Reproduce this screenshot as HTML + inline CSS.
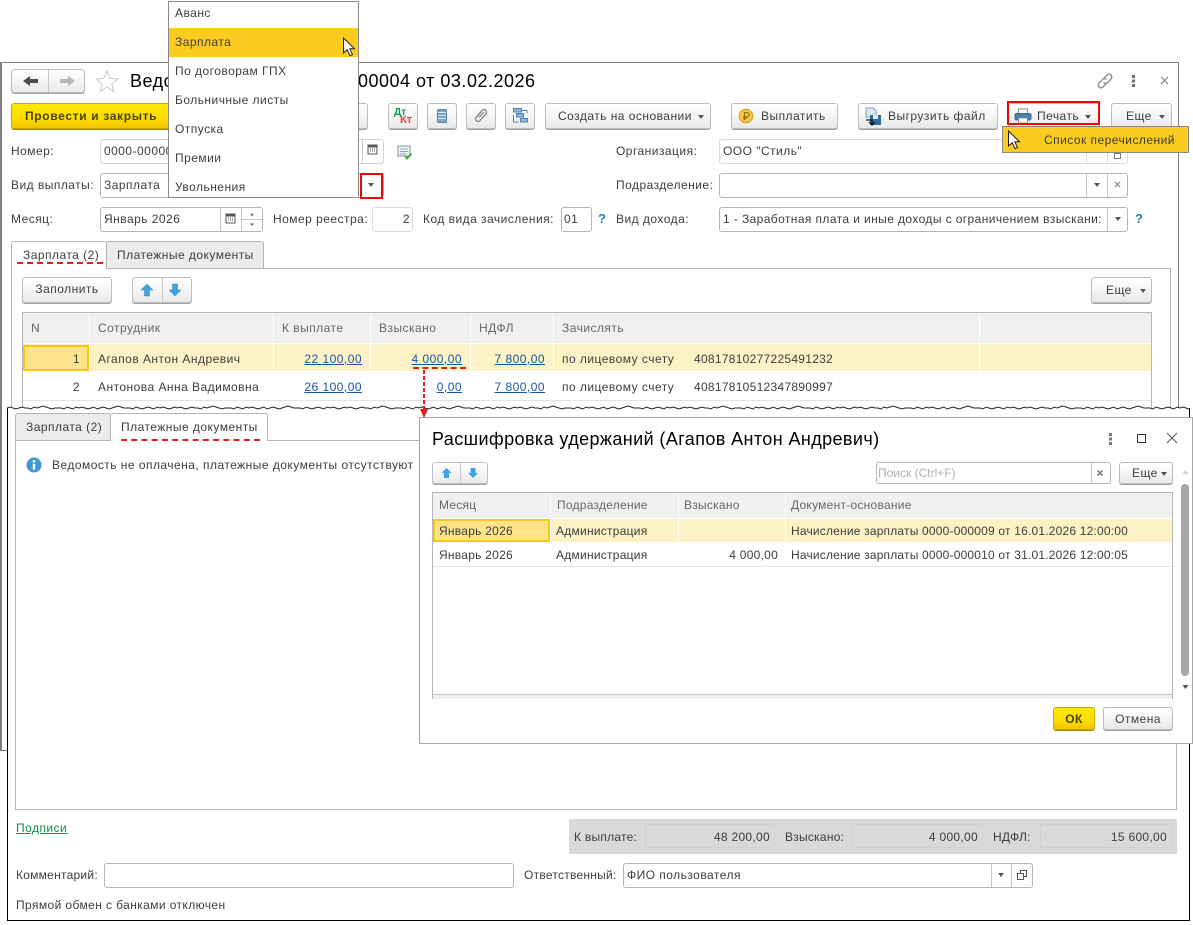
<!DOCTYPE html>
<html lang="ru"><head><meta charset="utf-8"><title>Ведомость</title>
<style>
html,body{margin:0;padding:0;background:#fff}
#p{position:relative;width:1193px;height:925px;overflow:hidden;background:#fff;font:12px "Liberation Sans",sans-serif;color:#3d3d3d;letter-spacing:.47px}
#p div,#p a,#p svg{position:absolute;box-sizing:border-box}
.t{white-space:nowrap;line-height:16px;height:16px}
.r{text-align:right}
.b{background:linear-gradient(#fff,#f6f6f6 45%,#e9e9e9);border:1px solid #bcbcbc;border-radius:3px;box-shadow:0 1px 0 #a0a0a0;text-align:center;line-height:23px;white-space:nowrap}
.y{background:linear-gradient(#ffe900,#fbdd00 60%,#f0c400);border:1px solid #c9a900;border-radius:3px;box-shadow:0 1px 0 #a38a00;text-align:center;white-space:nowrap;font-weight:bold;color:#4a4300}
.i{background:#fff;border:1px solid #b5b5b5;border-radius:3px}
.il{background:#fff;border:1px solid #dcdcdc;border-radius:3px}
.v{width:1px;background:#c8c8c8}
.h{background:#f0f0f0;color:#555}
.ar{width:0;height:0;border-left:3px solid transparent;border-right:3px solid transparent;border-top:4px solid #555}
.l{color:#1b55a7;text-decoration:underline}
.w{width:1px;background:#fff}
.q{color:#1b84c4;font-weight:bold;font-size:13px}
.d{height:0;border-top:2px dashed #e41c1c}
.s{letter-spacing:.25px}
</style></head><body><div id="p">

<!-- window 1 -->
<div style="left:0;top:62px;width:1179px;height:689px;border:1px solid #7f7f7f;border-left-width:2px"></div>

<div class="b" style="left:11px;top:69px;width:74px;height:24px"></div>
<div class="v" style="left:48px;top:70px;height:22px"></div>
<svg style="left:21px;top:74px" width="60" height="14"><path d="M2 7l7-5v3h8v4h-8v3z" fill="#4b4b4b"/><path d="M54 7l-7-5v3h-8v4h8v3z" fill="#b5b5b5"/></svg>
<svg style="left:95px;top:69px" width="24" height="24"><path d="M12 2l3 7.400 7.800.6-6 5 1.900 7.700L12 18l-6.700 4.700L7.200 15l-6-5L9 9.400z" fill="#fff" stroke="#c9c9c9"/></svg>
<div class="t" style="left:130px;top:71px;font-size:18px;line-height:20px;height:20px;color:#000;letter-spacing:.5px">Ведо</div>
<div class="t" style="left:358px;top:71px;font-size:18px;line-height:20px;height:20px;color:#000;letter-spacing:.5px">00004 от 03.02.2026</div>
<svg style="left:1096px;top:72px" width="18" height="18" fill="none" stroke="#8a8a8a" stroke-width="1.300"><path d="M8 6l3-3a2.800 2.800 0 014 4l-3.500 3.500a2.800 2.800 0 01-4 0"/><path d="M10 12l-3 3a2.800 2.800 0 01-4-4l3.500-3.500a2.800 2.800 0 014 0"/></svg>
<svg style="left:1131px;top:74px" width="6" height="14" fill="#6e6e6e"><rect x="1" y="1" width="3" height="3"/><rect x="1" y="5.500" width="3" height="3"/><rect x="1" y="10" width="3" height="3"/></svg>
<svg style="left:1160px;top:76px" width="10" height="10" stroke="#777" fill="none"><path d="M1 1l7 7M8 1l-7 7"/></svg>

<div class="b" style="left:172px;top:103px;width:196px;height:26px"></div>
<div class="y" style="left:11px;top:103px;width:160px;height:26px;line-height:25px;text-align:left;padding-left:13px;letter-spacing:.66px">Провести и закрыть</div>
<div class="b" style="left:388px;top:103px;width:30px;height:26px"></div>
<div class="t" style="left:394px;top:108px;font-size:10px;line-height:10px;height:10px;color:#0f9a4e;font-weight:bold;letter-spacing:0">Дт</div>
<div class="t" style="left:400px;top:115px;font-size:11px;line-height:10px;height:10px;color:#e8413d;font-weight:bold;letter-spacing:0">Кт</div>
<div class="b" style="left:427px;top:103px;width:30px;height:26px"></div>
<svg style="left:436px;top:108px" width="12" height="16"><rect x="1.500" y="1.500" width="9" height="13" rx="1" fill="#7fa6c6" stroke="#5d83a3"/><path d="M2 4.500h8M2 7.500h8M2 10.500h8" stroke="#d5e4ef"/></svg>
<div class="b" style="left:466px;top:103px;width:30px;height:26px"></div>
<svg style="left:474px;top:108px" width="15" height="15" fill="none" stroke="#858585" stroke-width="1.300"><path d="M3 8l5-5.500a2.500 2.500 0 014 3.200L6 12.500a2.500 2.500 0 01-4-3l5.500-6"/><path d="M5 9.500l5-5.500"/></svg>
<div class="b" style="left:505px;top:103px;width:30px;height:26px"></div>
<svg style="left:512px;top:108px" width="16" height="15"><rect x="1.500" y=".5" width="8" height="3.500" fill="#8fb6d6" stroke="#4b86b4"/><rect x="4.500" y="5.500" width="7" height="3.500" fill="#8fb6d6" stroke="#4b86b4"/><rect x="8.500" y="10.500" width="7" height="3.500" fill="#8fb6d6" stroke="#4b86b4"/><path d="M10 2.500h5v3M1.500 7v7h5" fill="none" stroke="#4b86b4"/></svg>
<div class="b" style="left:545px;top:103px;width:166px;height:26px;text-align:left;padding-left:12px;line-height:24px">Создать на основании</div>
<div class="ar" style="left:698px;top:115px"></div>
<div class="b" style="left:731px;top:103px;width:107px;height:26px;text-align:left;padding-left:29px;line-height:24px">Выплатить</div>
<svg style="left:738px;top:108px" width="16" height="16"><circle cx="8" cy="8" r="6.800" fill="#f5c843" stroke="#d19a1a"/><path d="M6.500 12V4.500h2.500a2 2 0 010 4.300H5M5 10.300h4" fill="none" stroke="#9a6a00" stroke-width="1.100"/></svg>
<div class="b" style="left:858px;top:103px;width:140px;height:26px;text-align:left;padding-left:29px;line-height:24px">Выгрузить файл</div>
<svg style="left:864px;top:107px" width="18" height="19"><path d="M2 1h7l3 3v6H2z" fill="#dbe8f3" stroke="#7fa0bd"/><rect x="6" y="8" width="11" height="10" fill="#2f6ca3"/><rect x="9" y="8" width="5" height="4" fill="#e8eef4"/><path d="M2 13h6v4M5 15l3 3 3-3" fill="none" stroke="#111" stroke-width="1.200"/></svg>
<div class="b" style="left:1008px;top:103px;width:92px;height:26px"></div>
<svg style="left:1014px;top:108px" width="18" height="16"><rect x="4.500" y="1" width="9" height="5" fill="#fff" stroke="#8a8a8a"/><rect x="1" y="5.500" width="16" height="6.500" rx="1.500" fill="#4d7fa8" stroke="#3a6a92"/><rect x="4.500" y="10" width="9" height="5" fill="#fff" stroke="#8a8a8a"/></svg>
<div class="t" style="left:1037px;top:108px">Печать</div>
<div class="ar" style="left:1085px;top:115px"></div>
<div style="left:1007px;top:101px;width:93px;height:24px;border:2px solid #e60a0a"></div>
<div class="b" style="left:1111px;top:103px;width:61px;height:26px;text-align:left;padding-left:14px;line-height:24px">Еще</div>
<div class="ar" style="left:1159px;top:115px"></div>

<div class="t" style="left:11px;top:143px">Номер:</div>
<div class="i" style="left:100px;top:139px;width:284px;height:25px;border-color:#d4d4d4"></div>
<div class="t" style="left:104px;top:143px">0000-00000</div>
<div class="v" style="left:362px;top:140px;height:23px"></div>
<svg style="left:367px;top:143px" width="12" height="13"><rect x="1" y="2" width="9" height="9" fill="#fff" stroke="#555"/><path d="M1 3.500h9" stroke="#555" stroke-width="2"/><path d="M3 6h1M5 6h1M7 6h1M3 8h1M5 8h1M7 8h1" stroke="#555"/></svg>
<svg style="left:397px;top:145px" width="17" height="16"><rect x="1" y="1" width="12" height="10" fill="#f2f5f7" stroke="#7d97a8"/><path d="M3 4h8M3 6.500h8M3 9h6" stroke="#8ca3b3"/><path d="M8 11l2 2.500 4.500-5" fill="none" stroke="#3fb23f" stroke-width="2"/></svg>

<div class="t" style="left:11px;top:177px">Вид выплаты:</div>
<div class="i" style="left:100px;top:173px;width:284px;height:25px"></div>
<div class="t" style="left:104px;top:177px">Зарплата</div>
<div class="ar" style="left:368px;top:183px"></div>
<div style="left:360px;top:173px;width:23px;height:26px;border:2px solid #e60a0a"></div>

<div class="t" style="left:11px;top:211px">Месяц:</div>
<div class="i" style="left:100px;top:207px;width:163px;height:25px"></div>
<div class="t" style="left:104px;top:211px">Январь 2026</div>
<div class="v" style="left:220px;top:208px;height:23px"></div>
<div class="v" style="left:241px;top:208px;height:23px"></div>
<div style="left:242px;top:219px;width:20px;height:1px;background:#c8c8c8"></div>
<svg style="left:225px;top:212px" width="12" height="13"><rect x="1" y="2" width="9" height="9" fill="#fff" stroke="#555"/><path d="M1 3.500h9" stroke="#555" stroke-width="2"/><path d="M3 6h1M5 6h1M7 6h1M3 8h1M5 8h1M7 8h1" stroke="#555"/></svg>
<svg style="left:248px;top:212px" width="8" height="16" fill="#666"><path d="M4 1l2 2.500H2zM4 14l2-2.500H2z"/></svg>
<div class="t" style="left:273px;top:211px">Номер реестра:</div>
<div class="il" style="left:372px;top:207px;width:41px;height:25px"></div>
<div class="t r" style="left:372px;top:211px;width:38px">2</div>
<div class="t" style="left:423px;top:211px">Код вида зачисления:</div>
<div class="i" style="left:561px;top:207px;width:31px;height:25px"></div>
<div class="t" style="left:564px;top:211px">01</div>
<div class="t q" style="left:598px;top:211px">?</div>

<div class="t" style="left:616px;top:143px">Организация:</div>
<div class="il" style="left:719px;top:139px;width:409px;height:25px"></div>
<div class="t" style="left:723px;top:143px">ООО "Стиль"</div>
<div class="v" style="left:1086px;top:140px;height:23px;background:#dcdcdc"></div>
<div class="v" style="left:1107px;top:140px;height:23px;background:#dcdcdc"></div>
<div style="left:1114px;top:153px;width:7px;height:6px;border:1px solid #777"></div>
<div class="t" style="left:616px;top:177px">Подразделение:</div>
<div class="i" style="left:719px;top:173px;width:409px;height:25px"></div>
<div class="v" style="left:1086px;top:174px;height:23px"></div>
<div class="v" style="left:1107px;top:174px;height:23px"></div>
<div class="ar" style="left:1094px;top:183px"></div>
<svg style="left:1114px;top:181px" width="8" height="8" stroke="#777" fill="none"><path d="M1 1l5 5M6 1l-5 5"/></svg>
<div class="t" style="left:616px;top:211px">Вид дохода:</div>
<div class="i" style="left:719px;top:207px;width:409px;height:25px"></div>
<div class="t" style="left:723px;top:211px;width:384px;overflow:hidden;letter-spacing:.4px">1 - Заработная плата и иные доходы с ограничением взыскани:</div>
<div class="v" style="left:1107px;top:208px;height:23px"></div>
<div class="ar" style="left:1115px;top:217px"></div>
<div class="t q" style="left:1135px;top:211px">?</div>

<div style="left:11px;top:268px;width:1160px;height:150px;border:1px solid #b5b5b5;border-bottom:0"></div>
<div style="left:11px;top:241px;width:96px;height:28px;background:#fff;border:1px solid #b5b5b5;border-bottom:0;border-radius:3px 3px 0 0"></div>
<div style="left:106px;top:241px;width:158px;height:27px;background:#ececec;border:1px solid #b5b5b5;border-bottom:0;border-radius:3px 3px 0 0"></div>
<div class="t" style="left:23px;top:247px">Зарплата (2)</div>
<div class="t" style="left:117px;top:247px">Платежные документы</div>
<div class="d" style="left:17px;top:262px;width:86px"></div>

<div class="b" style="left:22px;top:277px;width:90px;height:26px">Заполнить</div>
<div class="b" style="left:132px;top:277px;width:60px;height:26px"></div>
<div class="v" style="left:162px;top:278px;height:24px"></div>
<svg style="left:140px;top:283px" width="42" height="14"><path d="M7 1l6 6h-3.500v6h-5V7H1z" fill="#3ea3e0" stroke="#2a86c0" stroke-width=".5"/><path d="M35 13l6-6h-3.500V1h-5v6H29z" fill="#3ea3e0" stroke="#2a86c0" stroke-width=".5"/></svg>
<div class="b" style="left:1091px;top:277px;width:61px;height:26px;text-align:left;padding-left:14px;line-height:24px">Еще</div>
<div class="ar" style="left:1140px;top:289px"></div>

<div style="left:22px;top:312px;width:1130px;height:110px;border:1px solid #b5b5b5;border-bottom:0"></div>
<div class="h" style="left:23px;top:313px;width:1128px;height:30px"></div>
<div style="left:23px;top:344px;width:1128px;height:27px;background:#fdf2c5"></div>
<div style="left:23px;top:345px;width:66px;height:26px;background:#fde38a;border:2px solid #f9c710"></div>
<div style="left:23px;top:400px;width:1128px;height:1px;background:#e2e2e2"></div>
<div class="w" style="left:89px;top:313px;height:58px"></div><div class="w" style="left:273px;top:313px;height:58px"></div><div class="w" style="left:370px;top:313px;height:58px"></div><div class="w" style="left:470px;top:313px;height:58px"></div><div class="w" style="left:553px;top:313px;height:58px"></div><div class="w" style="left:979px;top:313px;height:58px"></div>
<div class="t" style="left:31px;top:320px;color:#666">N</div>
<div class="t" style="left:98px;top:320px;color:#666">Сотрудник</div>
<div class="t" style="left:282px;top:320px;color:#666">К выплате</div>
<div class="t" style="left:379px;top:320px;color:#666">Взыскано</div>
<div class="t" style="left:479px;top:320px;color:#666">НДФЛ</div>
<div class="t" style="left:562px;top:320px;color:#666">Зачислять</div>

<div class="t r" style="left:30px;top:351px;width:50px">1</div>
<div class="t" style="left:98px;top:351px">Агапов Антон Андревич</div>
<a class="t r l" style="left:280px;top:351px;width:82px">22 100,00</a>
<a class="t r l" style="left:380px;top:351px;width:82px">4 000,00</a>
<a class="t r l" style="left:463px;top:351px;width:82px">7 800,00</a>
<div class="t" style="left:562px;top:351px">по лицевому счету</div>
<div class="t" style="left:694px;top:351px;letter-spacing:.28px">40817810277225491232</div>
<div class="t r" style="left:30px;top:379px;width:50px">2</div>
<div class="t" style="left:98px;top:379px">Антонова Анна Вадимовна</div>
<a class="t r l" style="left:280px;top:379px;width:82px">26 100,00</a>
<a class="t r l" style="left:380px;top:379px;width:82px">0,00</a>
<a class="t r l" style="left:463px;top:379px;width:82px">7 800,00</a>
<div class="t" style="left:562px;top:379px">по лицевому счету</div>
<div class="t" style="left:694px;top:379px;letter-spacing:.28px">40817810512347890997</div>
<div class="d" style="left:413px;top:367px;width:53px"></div>

<!-- dropdown -->
<div style="left:168px;top:1px;width:191px;height:197px;background:#fff;border:1px solid #8a8a8a;z-index:5">
 <div style="left:0;top:26px;width:189px;height:29px;background:#fccb1f"></div>
 <div class="t" style="left:6px;top:3px">Аванс</div>
 <div class="t" style="left:6px;top:32px">Зарплата</div>
 <div class="t" style="left:6px;top:61px">По договорам ГПХ</div>
 <div class="t" style="left:6px;top:90px">Больничные листы</div>
 <div class="t" style="left:6px;top:119px">Отпуска</div>
 <div class="t" style="left:6px;top:148px">Премии</div>
 <div class="t" style="left:6px;top:177px">Увольнения</div>
</div>
<svg style="left:342px;top:37px;z-index:6" width="15" height="21"><path d="M1.500 1v15l3.800-3.300 2.700 6 2.500-1.100-2.700-5.800h4.700z" fill="#fff" stroke="#222"/></svg>

<!-- print popup -->
<div style="left:1002px;top:126px;width:187px;height:27px;background:#fccb1f;border:1px solid #8a8a8a;z-index:5"></div>
<div class="t" style="left:1044px;top:132px;z-index:6">Список перечислений</div>
<svg style="left:1007px;top:130px;z-index:6" width="15" height="21"><path d="M1.500 1v15l3.800-3.300 2.700 6 2.500-1.100-2.700-5.800h4.700z" fill="#fff" stroke="#222"/></svg>

<!-- window 2 -->
<div style="left:7px;top:408px;width:1183px;height:513px;background:#fff;border:1px solid #000;border-top:0;z-index:7"></div>
<svg style="left:7px;top:401px;z-index:8" width="1183" height="16"><defs><pattern id="wv" width="170" height="16" patternUnits="userSpaceOnUse"><polyline points="0,7 3,6 6,7 9,8 12,7 15,6 18,7 21,7 24,8 27,6 30,7 33,6 36,5 39,6 42,7 45,8 48,7 51,7 54,7 57,8 60,6 63,7 66,8 69,6 72,7 75,6 78,7 81,8 84,7 87,6 90,8 93,7 96,6 99,7 102,8 105,7 108,6 111,5 114,6 117,7 120,7 123,7 126,8 129,6 132,7 135,8 138,7 141,6 144,7 147,8 150,6 153,7 156,6 159,7 162,8 165,7 168,6 170,7" fill="none" stroke="#222"/></pattern></defs><rect x="0" y="0" width="1183" height="16" fill="url(#wv)"/></svg>

<div style="left:15px;top:440px;width:1162px;height:370px;border:1px solid #b5b5b5;z-index:8"></div>
<div style="left:15px;top:413px;width:96px;height:27px;background:#ececec;border:1px solid #b5b5b5;border-bottom:0;border-radius:3px 3px 0 0;z-index:8"></div>
<div style="left:110px;top:413px;width:158px;height:28px;background:#fff;border:1px solid #b5b5b5;border-bottom:0;border-radius:3px 3px 0 0;z-index:9"></div>
<div class="t" style="left:26px;top:419px;z-index:9">Зарплата (2)</div>
<div class="t" style="left:121px;top:419px;z-index:10">Платежные документы</div>
<div class="d" style="left:121px;top:439px;width:139px;z-index:10"></div>
<svg style="left:26px;top:457px;z-index:9" width="16" height="16"><circle cx="8" cy="8" r="7.500" fill="#3f97d3"/><circle cx="8" cy="4.300" r="1.400" fill="#fff"/><rect x="6.800" y="6.800" width="2.400" height="6" fill="#fff"/></svg>
<div class="t" style="left:52px;top:457px;z-index:9">Ведомость не оплачена, платежные документы отсутствуют</div>

<a class="t" style="left:16px;top:820px;z-index:9;color:#0a8f47;text-decoration:underline">Подписи</a>
<div style="left:569px;top:819px;width:608px;height:35px;background:#d9d9d9;z-index:9"></div>
<div class="t s" style="left:574px;top:829px;z-index:10">К выплате:</div>
<div style="left:645px;top:824px;width:130px;height:24px;border:1px solid #cfcfcf;border-radius:3px;z-index:10"></div>
<div class="t r" style="left:650px;top:829px;width:120px;z-index:10;letter-spacing:.3px">48 200,00</div>
<div class="t s" style="left:785px;top:829px;z-index:10">Взыскано:</div>
<div style="left:852px;top:824px;width:131px;height:24px;border:1px solid #cfcfcf;border-radius:3px;z-index:10"></div>
<div class="t r" style="left:858px;top:829px;width:120px;z-index:10;letter-spacing:.3px">4 000,00</div>
<div class="t s" style="left:993px;top:829px;z-index:10">НДФЛ:</div>
<div style="left:1040px;top:824px;width:132px;height:24px;border:1px solid #cfcfcf;border-radius:3px;z-index:10"></div>
<div class="t r" style="left:1047px;top:829px;width:120px;z-index:10;letter-spacing:.3px">15 600,00</div>

<div class="t s" style="left:16px;top:867px;z-index:9">Комментарий:</div>
<div class="i" style="left:104px;top:863px;width:410px;height:25px;z-index:9"></div>
<div class="t s" style="left:524px;top:867px;z-index:9">Ответственный:</div>
<div class="i" style="left:623px;top:863px;width:410px;height:25px;z-index:9"></div>
<div class="t" style="left:627px;top:867px;z-index:10">ФИО пользователя</div>
<div class="v" style="left:991px;top:864px;height:23px;z-index:10"></div>
<div class="v" style="left:1011px;top:864px;height:23px;z-index:10"></div>
<div class="ar" style="left:998px;top:873px;z-index:10"></div>
<svg style="left:1017px;top:870px;z-index:10" width="11" height="11" fill="none" stroke="#555"><rect x="3.500" y=".5" width="6" height="6"/><rect x=".5" y="3.500" width="6" height="6" fill="#fff"/></svg>
<div class="t" style="left:16px;top:897px;z-index:9;letter-spacing:.4px">Прямой обмен с банками отключен</div>

<!-- dialog -->
<div style="left:419px;top:417px;width:774px;height:327px;background:#fff;border:1px solid #a8a8a8;z-index:20"></div>
<div style="z-index:21;left:0;top:0;width:1193px;height:925px">
<div class="t" style="left:432px;top:429px;font-size:18px;line-height:20px;height:20px;color:#000;letter-spacing:.4px">Расшифровка удержаний (Агапов Антон Андревич)</div>
<svg style="left:1108px;top:432px" width="6" height="14" fill="#777"><rect x="1" y="1" width="3" height="3"/><rect x="1" y="5.500" width="3" height="3"/><rect x="1" y="10" width="3" height="3"/></svg>
<div style="left:1137px;top:434px;width:9px;height:9px;border:1px solid #333"></div>
<svg style="left:1166px;top:432px" width="13" height="13" stroke="#555" fill="none"><path d="M1 1l10 10M11 1L1 11"/></svg>
<div class="b" style="left:432px;top:462px;width:56px;height:22px"></div>
<div class="v" style="left:460px;top:463px;height:20px"></div>
<svg style="left:441px;top:467px" width="38" height="12"><path d="M5.500 1l5 5H8v5H3V6H.5z" fill="#3ea3e0"/><path d="M32 11l5-5h-2.500V1h-5v5H27z" fill="#3ea3e0"/></svg>
<div class="i" style="left:876px;top:462px;width:235px;height:22px"></div>
<div class="t" style="left:878px;top:465px;color:#b0b0b0;letter-spacing:0">Поиск (Ctrl+F)</div>
<div class="v" style="left:1091px;top:463px;height:20px"></div>
<svg style="left:1096px;top:469px" width="9" height="9" stroke="#888" stroke-width="1.800" fill="none"><path d="M1.500 1.500l5 5M6.500 1.500l-5 5"/></svg>
<div class="b" style="left:1119px;top:462px;width:54px;height:22px;text-align:left;padding-left:12px;line-height:21px">Еще</div>
<div class="ar" style="left:1161px;top:472px"></div>

<div style="left:432px;top:492px;width:741px;height:207px;border:1px solid #b5b5b5;border-bottom:0"></div>
<div class="h" style="left:433px;top:493px;width:739px;height:25px"></div>
<div style="left:433px;top:519px;width:739px;height:23px;background:#fdf2c5"></div>
<div style="left:433px;top:519px;width:117px;height:23px;background:#fde38a;border:2px solid #f9c710"></div>
<div style="left:433px;top:566px;width:739px;height:1px;background:#e6e6e6"></div>
<div class="h" style="left:433px;top:694px;width:739px;height:5px;border-top:1px solid #c8c8c8"></div>
<div class="w" style="left:550px;top:493px;height:49px"></div><div class="w" style="left:678px;top:493px;height:49px"></div><div class="w" style="left:785px;top:493px;height:49px"></div>
<div class="w" style="left:550px;top:695px;height:4px"></div><div class="w" style="left:678px;top:695px;height:4px"></div><div class="w" style="left:785px;top:695px;height:4px"></div>
<div class="t s" style="left:439px;top:497px;color:#666">Месяц</div>
<div class="t s" style="left:557px;top:497px;color:#666">Подразделение</div>
<div class="t s" style="left:684px;top:497px;color:#666">Взыскано</div>
<div class="t s" style="left:791px;top:497px;color:#666">Документ-основание</div>
<div class="t s" style="left:439px;top:523px">Январь 2026</div>
<div class="t s" style="left:556px;top:523px">Администрация</div>
<div class="t" style="left:791px;top:523px;letter-spacing:.19px">Начисление зарплаты 0000-000009 от 16.01.2026 12:00:00</div>
<div class="t s" style="left:439px;top:547px">Январь 2026</div>
<div class="t s" style="left:556px;top:547px">Администрация</div>
<div class="t r s" style="left:690px;top:547px;width:88px">4 000,00</div>
<div class="t" style="left:791px;top:547px;letter-spacing:.19px">Начисление зарплаты 0000-000010 от 31.01.2026 12:00:05</div>

<svg style="left:1181px;top:469px" width="9" height="225"><path d="M4.500 1l3 4h-6z" fill="#cfcfcf"/><path d="M4.500 220l3-4h-6z" fill="#555"/></svg>
<div style="left:1181px;top:484px;width:8px;height:192px;background:#a9a9a9;border-radius:4px"></div>

<div class="y" style="left:1053px;top:707px;width:42px;height:23px;line-height:22px">ОК</div>
<div class="b" style="left:1103px;top:707px;width:70px;height:23px;line-height:22px">Отмена</div>

<svg style="left:419px;top:370px" width="10" height="50"><path d="M5 0v40" stroke="#e41c1c" stroke-width="2" stroke-dasharray="4 2"/><path d="M1 39h8l-4 9z" fill="#e41c1c"/></svg>
</div>
</div></body></html>
